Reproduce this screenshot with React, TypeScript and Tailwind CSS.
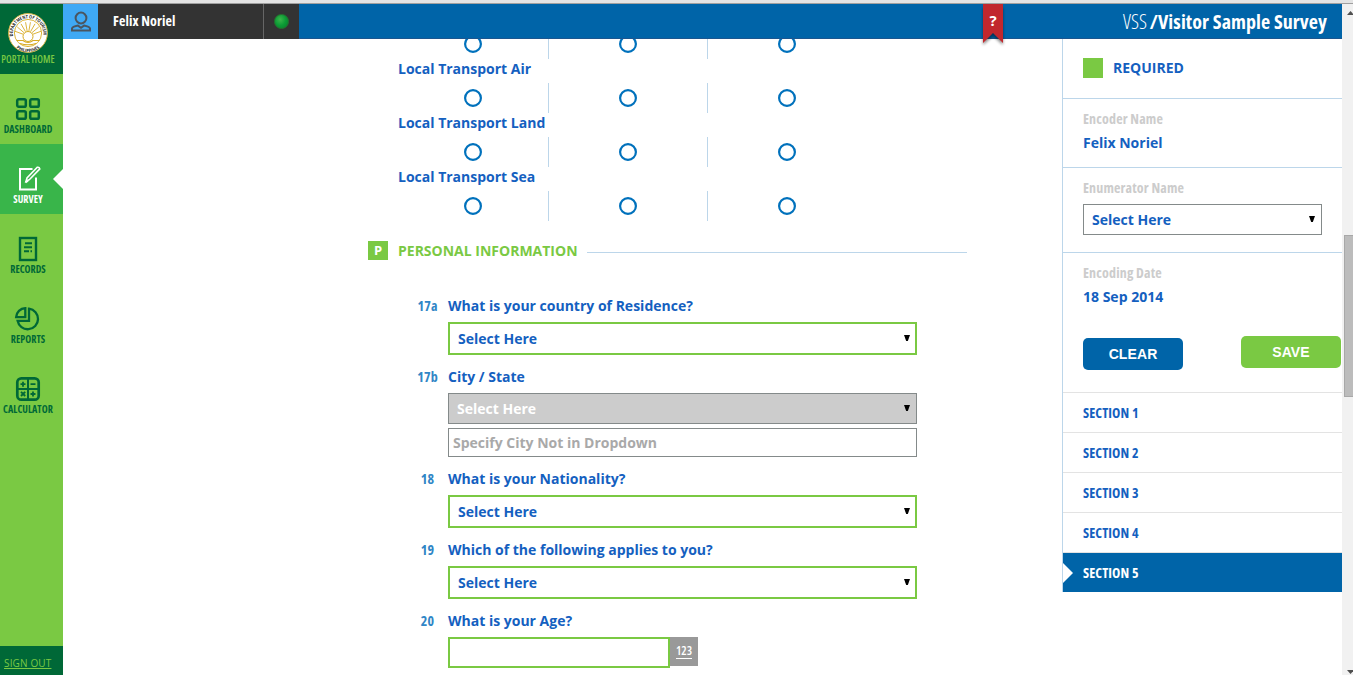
import type { ReactNode } from "react";

const SANS = "font-['Open_Sans','Liberation_Sans',sans-serif]";

function Caret() {
  return (
    <svg width="6" height="6" viewBox="0 0 6 6" className="mb-0.5 shrink-0">
      <path d="M0 0H6L3.8 6H2.2Z" fill="#000" />
    </svg>
  );
}

function Select({ required = false, disabled = false }: { required?: boolean; disabled?: boolean }) {
  const box = required
    ? "h-[33px] border-2 border-[#7ac943] pl-2 pr-[5px] text-[#1460c0]"
    : disabled
      ? "h-[31px] border border-[#848a8a] bg-[#cccccc] pl-2 pr-1.5 text-white"
      : "h-[31px] border border-[#848a8a] pl-2 pr-1.5 text-[#1460c0]";
  return (
    <div className={`flex w-full items-center justify-between ${box}`}>
      <span className="text-[14px] leading-[20px] font-bold">Select Here</span>
      <Caret />
    </div>
  );
}

function Question({ no, label, children }: { no: string; label: string; children: ReactNode }) {
  return (
    <div className="mb-3 flex">
      <div className="ml-[49px] w-[21px] text-center text-[14px] leading-[20px] font-bold tracking-[0.2px] font-stretch-condensed text-[#3186c6]">
        {no}
      </div>
      <div className="ml-2.5 w-[469px]">
        <div className="h-[26px] text-[14px] leading-[20px] font-bold whitespace-nowrap text-[#1460c0]">
          {label}
        </div>
        {children}
      </div>
    </div>
  );
}

function Radios() {
  const ring = (
    <svg width="18" height="18" viewBox="0 0 18 18" fill="none">
      <circle cx="9" cy="9" r="7.9" stroke="#0071bc" strokeWidth="2.2" />
    </svg>
  );
  return (
    <div className="flex h-[30px]">
      <div className="flex w-[151px] items-center justify-center border-r border-[#bcd6ea]">{ring}</div>
      <div className="flex w-[159px] items-center justify-center border-r border-[#bcd6ea]">{ring}</div>
      <div className="flex w-[158px] items-center justify-center">{ring}</div>
    </div>
  );
}

function Seal() {
  return (
    <svg width="40" height="40" viewBox="0 0 40 40">
      <circle cx="20" cy="20" r="19.4" fill="#fff" stroke="#d9b64a" strokeWidth="1" />
      <circle cx="20" cy="20" r="13.6" fill="#fff" stroke="#d7aa22" strokeWidth="0.9" />
      {[-70, -50, -30, -10, 10, 30, 50, 70].map((a) => (
        <path key={a} d="M20 18V9" stroke="#d7aa22" strokeWidth="0.8" transform={`rotate(${a} 20 23)`} />
      ))}
      <circle cx="20" cy="23.5" r="5" fill="#fff" stroke="#d7aa22" strokeWidth="1" />
      <path d="M8.5 27.5H15Q20 31.5 25 27.5H31.5M12 30.5Q20 33 28 30.5" stroke="#d7aa22" strokeWidth="1.2" fill="none" />
      <defs>
        <path id="sealTop" d="M5.2 24A15.2 15.2 0 1 1 34.8 24" />
        <path id="sealBottom" d="M5 31A18 18 0 0 0 35 31" />
      </defs>
      <text fontSize="4.6" fontWeight="700" fill="#222" className={SANS}>
        <textPath href="#sealTop" startOffset="1" textLength="51" lengthAdjust="spacingAndGlyphs">DEPARTMENT OF TOURISM</textPath>
      </text>
      <text fontSize="4.4" fontWeight="700" fill="#222" className={SANS}>
        <textPath href="#sealBottom" startOffset="50%" textAnchor="middle" textLength="25" lengthAdjust="spacingAndGlyphs">
          PHILIPPINES
        </textPath>
      </text>
    </svg>
  );
}

const DashboardIcon = (
  <svg width="26" height="24" viewBox="0 0 26 24" fill="none" stroke="#006837" strokeWidth="2.5">
    <rect x="2.2" y="2.2" width="8.6" height="7.6" rx="1.6" />
    <rect x="15.2" y="2.2" width="8.6" height="7.6" rx="1.6" />
    <rect x="2.2" y="14.2" width="8.6" height="7.6" rx="1.6" />
    <rect x="15.2" y="14.2" width="8.6" height="7.6" rx="1.6" />
  </svg>
);
const SurveyIcon = (
  <svg width="26" height="26" viewBox="0 0 26 26" fill="none" stroke="#fff">
    <path d="M17.5 3H5V23.5H21V11.5" strokeWidth="2" />
    <path d="M11 15.5L12 12L22.3 1.3Q24.3 0.9 24.8 2.9L14.3 13.7Z" strokeWidth="1.6" />
    <path d="M10.5 16.3L13 14.7" strokeWidth="2" />
  </svg>
);
const RecordsIcon = (
  <svg width="22" height="26" viewBox="0 0 22 26" fill="none" stroke="#006837">
    <rect x="3" y="2" width="16" height="22" strokeWidth="2.4" />
    <path d="M8 7.2H15M7 11.2H15M7 15.2H12M13.5 15.2H15" strokeWidth="2" />
  </svg>
);
const ReportsIcon = (
  <svg width="26" height="26" viewBox="0 0 26 26" fill="none" stroke="#006837" strokeWidth="2.3" className="mr-0.5">
    <path d="M11.3 2.1V11.2H2.1A9.6 9.6 0 0 1 11.3 2.1Z" />
    <path d="M15 2.7A10.3 10.3 0 1 1 3.6 14.8H15Z" />
  </svg>
);
const CalculatorIcon = (
  <svg width="26" height="26" viewBox="0 0 26 26" fill="none" stroke="#006837">
    <rect x="2.3" y="2.3" width="21.4" height="21.4" rx="4" strokeWidth="2.7" />
    <path d="M13 2V24M2 13H24" strokeWidth="2" />
    <path d="M5.5 8.2H10.5M8 5.7V10.7M15.5 8.2H20.5M6 15.8L10.2 20M10.2 15.8L6 20M15.5 18H20.5M18 15.5V20.5" strokeWidth="1.8" />
  </svg>
);

function NavItem({ icon, label, active = false }: { icon: ReactNode; label: string; active?: boolean }) {
  return (
    <div className={`relative flex h-[70px] flex-col items-center pr-[7px] pt-[21px] ${active ? "bg-[#39b54a] text-white" : "text-[#006837]"}`}>
      <div className="flex h-[27px] items-center">{icon}</div>
      <div className="text-[10px] leading-[15px] font-bold tracking-[0.05px] font-stretch-condensed whitespace-nowrap">{label}</div>
      {active && (
        <svg width="10" height="20" viewBox="0 0 10 20" className="absolute top-[25px] right-0">
          <path d="M10 0V20L0 10Z" fill="#fff" />
        </svg>
      )}
    </div>
  );
}

function Sidebar() {
  return (
    <nav className="flex w-[63px] shrink-0 flex-col bg-[#7ac943]">
      <div className="flex h-[70px] flex-col items-center bg-[#006837] pt-[9px] pr-[7px]">
        <Seal />
        <div className="text-[10px] leading-[13px] font-semibold tracking-[0.1px] font-stretch-condensed whitespace-nowrap text-[#7ac943]">PORTAL HOME</div>
      </div>
      <NavItem icon={DashboardIcon} label="DASHBOARD" />
      <NavItem icon={SurveyIcon} label="SURVEY" active />
      <NavItem icon={RecordsIcon} label="RECORDS" />
      <NavItem icon={ReportsIcon} label="REPORTS" />
      <NavItem icon={CalculatorIcon} label="CALCULATOR" />
      <div className="mt-auto h-[29px] bg-[#006837] pt-[9px] pl-1 text-[10px] leading-[17px] tracking-[0.15px] whitespace-nowrap text-[#7ac943] underline">
        SIGN OUT
      </div>
    </nav>
  );
}

function Header() {
  return (
    <header className="flex h-[35px] shrink-0 bg-[#0064a8] text-white">
      <div className="flex w-[35px] items-center justify-center bg-[#3fa9f5]">
        <svg width="22" height="21" viewBox="0 0 22 21" fill="none" stroke="#4a5560" strokeWidth="2">
          <circle cx="11" cy="7" r="5.4" />
          <path d="M2 19.5V17.5Q2.5 15.6 8 14.6L11 16.8L14 14.6Q19.5 15.6 20 17.5V19.5Z" />
        </svg>
      </div>
      <div className="flex w-[166px] items-center border-r border-[#666] bg-[#333] pb-[3px] pl-[15px] text-[14px] font-bold tracking-[0.1px] font-stretch-condensed">
        Felix Noriel
      </div>
      <div className="flex w-[35px] items-center justify-center bg-[#333]">
        <div className="size-[15px] rounded-full border border-[#23762f] bg-radial-[at_40%_35%] from-[#3cb54a] via-[#0b9a35] to-[#087a2a]" />
      </div>
      <div className="relative flex flex-1 items-center justify-end border-b border-[#1b568f] pt-0.5 pr-[15px] text-[20px] font-stretch-condensed">
        <svg width="28" height="46" viewBox="0 0 28 46" className="absolute top-0 left-[680px]">
          <defs>
            <filter id="soft" x="-30%" y="-30%" width="160%" height="160%">
              <feGaussianBlur stdDeviation="1.4" />
            </filter>
          </defs>
          <path d="M4 4H24V41L14 32L4 41Z" fill="#000" opacity="0.45" filter="url(#soft)" />
          <path d="M4 0H24V39L14 29L4 39Z" fill="#c1272d" />
          <text x="14" y="22" fontSize="15" fontWeight="700" textAnchor="middle" fill="#fff" className="font-stretch-normal">?</text>
        </svg>
        <span className="mr-[3px] font-light">VSS</span>
        <span className="font-bold tracking-[0.08px]">/Visitor Sample Survey</span>
      </div>
    </header>
  );
}

function Form() {
  return (
    <main className="flex-1 overflow-hidden">
      <div className="-mt-2.5 ml-[335px]">
        <Radios />
        {["Local Transport Air", "Local Transport Land", "Local Transport Sea"].map((name) => (
          <div key={name}>
            <div className="h-6 text-[14px] leading-[20px] font-bold whitespace-nowrap text-[#1460c0]">{name}</div>
            <Radios />
          </div>
        ))}
      </div>
      <div className="mt-5 ml-[305px] flex h-5 w-[599px] items-center">
        <div className="mb-px flex h-[19px] w-5 items-center justify-center bg-[#7ac943] text-[13px] font-bold text-white">P</div>
        <div className="w-[190px] pl-2.5 text-[14px] leading-[20px] font-bold whitespace-nowrap text-[#7ac943]">
          PERSONAL INFORMATION
        </div>
        <div className="mt-[3px] ml-[9px] h-px flex-1 bg-[#bcd6ea]" />
      </div>
      <div className="mt-[35px] ml-[305px]">
        <Question no="17a" label="What is your country of Residence?">
          <Select required />
        </Question>
        <Question no="17b" label="City / State">
          <Select disabled />
          <div className="mt-1 h-[29px] border border-[#848a8a] pl-1 text-[14px] leading-[27px] font-bold text-[#a9a9a9]">
            Specify City Not in Dropdown
          </div>
        </Question>
        <Question no="18" label="What is your Nationality?">
          <Select required />
        </Question>
        <Question no="19" label="Which of the following applies to you?">
          <Select required />
        </Question>
        <Question no="20" label="What is your Age?">
          <div className="flex items-start">
            <div className="h-[31px] w-[222px] border-2 border-[#7ac943]" />
            <div className="flex h-[29px] w-7 justify-center bg-[#999] pt-[5px]">
              <span className="h-[17px] border-b border-white text-[12px] leading-[17px] font-semibold font-stretch-condensed text-white">123</span>
            </div>
          </div>
        </Question>
      </div>
    </main>
  );
}

function Caption({ children }: { children: ReactNode }) {
  return <div className="text-[14px] leading-[19px] font-bold tracking-[0.15px] font-stretch-condensed text-[#cccccc]">{children}</div>;
}

function Value({ children }: { children: ReactNode }) {
  return <div className="mt-[5px] text-[14px] leading-[20px] font-bold text-[#1460c0]">{children}</div>;
}

function Panel() {
  return (
    <aside className="h-[553px] w-[280px] shrink-0 border-l border-[#bcd6ea]">
      <div className="flex h-[60px] items-center border-b border-[#bcd6ea] pl-5">
        <div className="mb-px size-5 bg-[#7ac943]" />
        <div className="mb-0.5 ml-2.5 text-[14px] leading-[20px] font-bold text-[#1460c0]">REQUIRED</div>
      </div>
      <div className="h-[69px] border-b border-[#bcd6ea] pt-2.5 pl-5">
        <Caption>Encoder Name</Caption>
        <Value>Felix Noriel</Value>
      </div>
      <div className="h-[85px] border-b border-[#bcd6ea] pt-2.5 pr-5 pl-5">
        <Caption>Enumerator Name</Caption>
        <div className="mt-[7px]">
          <Select />
        </div>
      </div>
      <div className="h-[139px] pt-2.5 pl-5">
        <Caption>Encoding Date</Caption>
        <Value>18 Sep 2014</Value>
        <div className="mt-[29px] flex justify-between pr-px font-['Liberation_Sans',sans-serif] text-[14px] font-bold tracking-[0.1px] text-white">
          <div className="mt-0.5 flex h-8 w-[100px] items-center justify-center rounded-[5px] bg-[#0064a8]">CLEAR</div>
          <div className="flex h-8 w-[100px] items-center justify-center rounded-[5px] bg-[#7ac943]">SAVE</div>
        </div>
      </div>
      {["SECTION 1", "SECTION 2", "SECTION 3", "SECTION 4"].map((name) => (
        <div key={name} className="h-10 border-t border-[#e3e3e3] pl-5 text-[14px] leading-[39px] font-bold tracking-[0.1px] font-stretch-condensed text-[#1460c0]">
          {name}
        </div>
      ))}
      <div className="flex h-10 items-center border-t border-[#e3e3e3] bg-[#0064a8] text-[14px] leading-[39px] font-bold tracking-[0.1px] font-stretch-condensed text-white">
        <svg width="10" height="20" viewBox="0 0 10 20" className="mr-2.5">
          <path d="M0 0V20L10 10Z" fill="#fff" />
        </svg>
        SECTION 5
      </div>
    </aside>
  );
}

function Scrollbar() {
  return (
    <div className="flex w-[11px] shrink-0 flex-col overflow-hidden bg-[#f1f1f1]">
      <svg width="11" height="4" viewBox="0 0 11 4" className="mt-[7px] ml-[5px] shrink-0">
        <path d="M0 4H7L3.5 0Z" fill="#505050" />
      </svg>
      <div className="mt-[220px] ml-0.5 h-[162px] w-[13px] shrink-0 border border-[#a8a8a8] bg-[#bcbcbc]" />
      <svg width="11" height="4" viewBox="0 0 11 4" className="mt-auto mb-px ml-[5px] shrink-0">
        <path d="M0 0H7L3.5 4Z" fill="#505050" />
      </svg>
    </div>
  );
}

export default function App() {
  return (
    <div className={`flex h-[675px] w-[1353px] flex-col overflow-hidden bg-white ${SANS}`}>
      <div className="h-1 shrink-0 border-b border-[#a0a0a0] bg-[#e4e4e4]" />
      <div className="flex min-h-0 flex-1">
        <Sidebar />
        <div className="flex min-w-0 flex-1 flex-col">
          <Header />
          <div className="flex min-h-0 flex-1">
            <Form />
            <Panel />
          </div>
        </div>
        <Scrollbar />
      </div>
    </div>
  );
}
